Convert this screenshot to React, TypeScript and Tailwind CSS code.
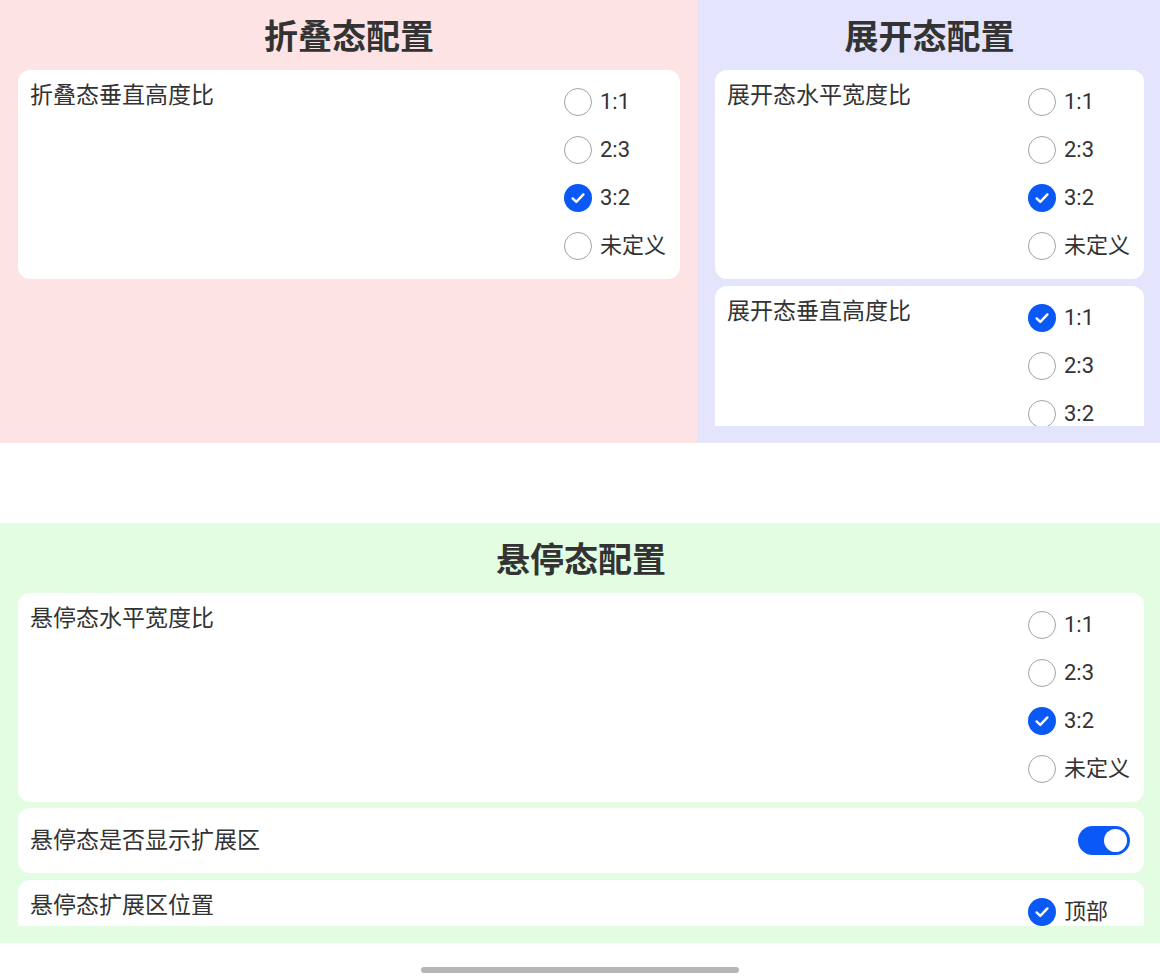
import React from "react";

const FONT = { fontFamily: 'Roboto, "Noto Sans CJK SC", "Noto Sans", sans-serif' };

function Check({ checked }: { checked: boolean }) {
  if (checked) {
    return (
      <span className="flex h-7 w-7 shrink-0 items-center justify-center rounded-full bg-[#0a59f7]">
        <svg width="18" height="18" viewBox="0 0 18 18" fill="none">
          <path d="M3.6 9.4 L7.3 12.9 L14.4 5.4" stroke="white" strokeWidth="2.4" strokeLinecap="round" strokeLinejoin="round" />
        </svg>
      </span>
    );
  }
  return <span className="h-7 w-7 shrink-0 rounded-full border-[1.5px] border-[#a3a3a3] bg-white" />;
}

function RadioGroup({ options, selected }: { options: string[]; selected: number }) {
  return (
    <div className="flex w-[116px] shrink-0 flex-col pb-[9px] pr-3 pt-2">
      {options.map((o, i) => (
        <div key={o} className="flex h-12 items-center gap-2">
          <Check checked={i === selected} />
          <span className="text-[22px] leading-none text-[#333]">{o}</span>
        </div>
      ))}
    </div>
  );
}

function RadioCard({ label, options, selected }: { label: string; options: string[]; selected: number }) {
  return (
    <div className="flex shrink-0 rounded-xl bg-white">
      <div className="flex-1 pl-3 pt-[11px] text-[23px] leading-[30px] text-[#333]">{label}</div>
      <RadioGroup options={options} selected={selected} />
    </div>
  );
}

function Title({ children }: { children: React.ReactNode }) {
  return (
    <div className="flex h-[70px] shrink-0 items-center justify-center pt-1 text-[34px] font-bold leading-none text-[#333]">
      {children}
    </div>
  );
}

const FOUR = ["1:1", "2:3", "3:2", "未定义"];

export default function App() {
  return (
    <div className="flex h-[979px] w-[1160px] flex-col bg-white" style={FONT}>
      <div className="flex h-[443px]">
        <div className="flex w-[697px] flex-col bg-[#fee3e4] pl-[18px] pr-[17px]">
          <Title>折叠态配置</Title>
          <RadioCard label="折叠态垂直高度比" options={FOUR} selected={2} />
        </div>
        <div className="flex flex-1 flex-col bg-[#e4e4fd] pb-[17px] pl-[18px] pr-4">
          <Title>展开态配置</Title>
          <div className="flex flex-1 flex-col gap-[7px] overflow-hidden">
            <RadioCard label="展开态水平宽度比" options={FOUR} selected={2} />
            <RadioCard label="展开态垂直高度比" options={["1:1", "2:3", "3:2"]} selected={0} />
          </div>
        </div>
      </div>

      <div className="h-20" />

      <div className="flex h-[420px] flex-col bg-[#e2fde2] pb-[17px] pl-[18px] pr-4">
        <Title>悬停态配置</Title>
        <div className="flex flex-1 flex-col gap-[6px] overflow-hidden">
          <RadioCard label="悬停态水平宽度比" options={FOUR} selected={2} />
          <div className="flex h-[65px] shrink-0 items-center justify-between rounded-xl bg-white pl-3 pr-[14px]">
            <span className="text-[23px] leading-[30px] text-[#333]">悬停态是否显示扩展区</span>
            <span className="flex h-[29px] w-[52px] items-center justify-end rounded-full bg-[#0a59f7] pr-[3px]">
              <span className="h-[23px] w-[23px] rounded-full bg-white" />
            </span>
          </div>
          <div className="mt-px">
            <RadioCard label="悬停态扩展区位置" options={["顶部"]} selected={0} />
          </div>
        </div>
      </div>

      <div className="flex flex-1 justify-center pt-[24px]">
        <div className="h-[6px] w-[318px] rounded-full bg-[#b5b5b5]" />
      </div>
    </div>
  );
}
